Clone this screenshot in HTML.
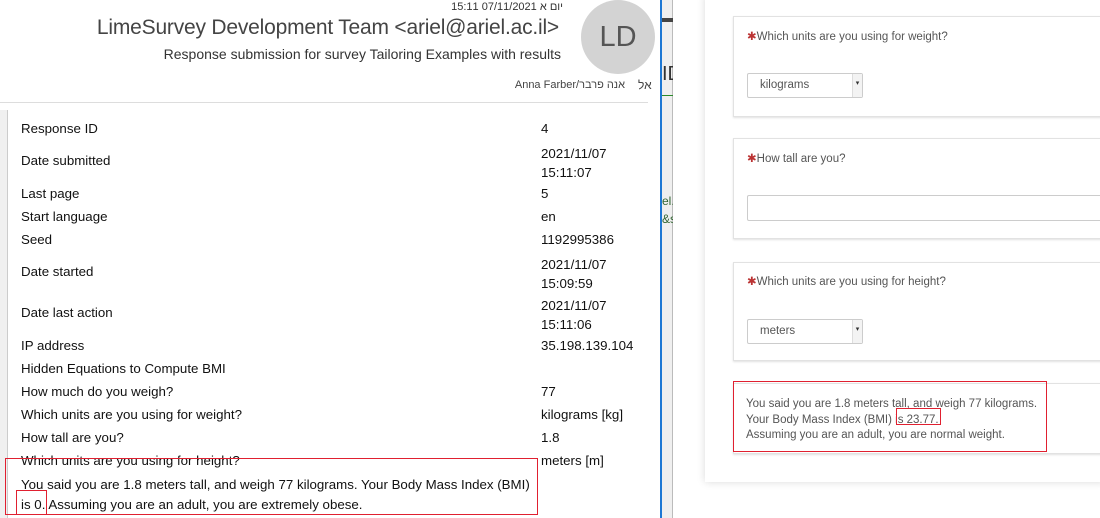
<!DOCTYPE html>
<html><head><meta charset="utf-8"><style>
*{margin:0;padding:0;box-sizing:border-box}
body{width:1100px;height:518px;position:relative;overflow:hidden;background:#fff;font-family:"Liberation Sans","Noto Sans CJK SC",sans-serif;color:#222}
.a{position:absolute;white-space:nowrap}
.l{position:absolute;left:21px;font-size:13.3px;color:#111}
.v{position:absolute;left:541px;font-size:13.3px;color:#111}
.card{position:absolute;left:733px;width:380px;border:1px solid #e2e2e2;background:#fff;box-shadow:0 1px 2px rgba(0,0,0,.12)}
.q{position:absolute;left:13px;font-size:11.5px;color:#555}
.q b{color:#b33;font-weight:normal}
.sel{position:absolute;left:13px;width:116px;height:25px;border:1px solid #ccc;border-radius:2px;font-size:11.5px;color:#555;padding:5px 0 0 12px;background:#fff}
.sel i{position:absolute;right:0;top:0;width:10px;height:23px;border-left:1px solid #ddd;background:#f3f3f3;font-style:normal;font-size:7px;text-align:center;line-height:20px;color:#333}
.rt{font-size:11.5px;color:#555;line-height:15.5px}
</style></head><body>
<div class="a" style="left:0;top:110px;width:8px;height:408px;background:#f0f0f0;border-right:1px solid #ccc"></div>
<div class="a" style="right:537px;top:1px;font-size:11px;color:#333">יום א 07/11/2021 15:11</div>
<div class="a" style="right:541px;top:16px;font-size:21px;color:#444;letter-spacing:-0.2px">LimeSurvey Development Team &lt;ariel@ariel.ac.il&gt;</div>
<div class="a" style="right:539px;top:46px;font-size:14px;color:#333">Response submission for survey Tailoring Examples with results</div>
<div class="a" style="left:581px;top:0;width:74px;height:74px;border-radius:50%;background:#d3d3d3;color:#555;font-size:29px;text-align:center;line-height:74px">LD</div>
<div class="a" style="right:475px;top:79px;font-size:11px;color:#444">Anna Farber/אנה פרבר</div>
<div class="a" style="left:638px;top:78px;font-size:12px;color:#444">אל</div>
<div class="a" style="left:0;top:102px;width:648px;height:1px;background:#ddd"></div>
<div class="l" style="top:121px">Response ID</div><div class="v" style="top:121px">4</div>
<div class="l" style="top:153px">Date submitted</div><div class="v" style="top:144px;line-height:19px">2021/11/07<br>15:11:07</div>
<div class="l" style="top:186px">Last page</div><div class="v" style="top:186px">5</div>
<div class="l" style="top:209px">Start language</div><div class="v" style="top:209px">en</div>
<div class="l" style="top:232px">Seed</div><div class="v" style="top:232px">1192995386</div>
<div class="l" style="top:264px">Date started</div><div class="v" style="top:255px;line-height:19px">2021/11/07<br>15:09:59</div>
<div class="l" style="top:305px">Date last action</div><div class="v" style="top:296px;line-height:19px">2021/11/07<br>15:11:06</div>
<div class="l" style="top:338px">IP address</div><div class="v" style="top:338px">35.198.139.104</div>
<div class="l" style="top:361px">Hidden Equations to Compute BMI</div>
<div class="l" style="top:384px">How much do you weigh?</div><div class="v" style="top:384px">77</div>
<div class="l" style="top:407px">Which units are you using for weight?</div><div class="v" style="top:407px">kilograms [kg]</div>
<div class="l" style="top:430px">How tall are you?</div><div class="v" style="top:430px">1.8</div>
<div class="l" style="top:453px">Which units are you using for height?</div><div class="v" style="top:453px">meters [m]</div>
<div class="l" style="top:475px;line-height:20px">You said you are 1.8 meters tall, and weigh 77 kilograms. Your Body Mass Index (BMI)<br>is 0. Assuming you are an adult, you are extremely obese.</div>
<div class="a" style="left:5px;top:458px;width:533px;height:57px;border:1px solid #e02030"></div>
<div class="a" style="left:16px;top:490px;width:31px;height:25px;border:1px solid #e02030"></div>
<div class="a" style="left:660px;top:0;width:2px;height:518px;background:#1e78d4"></div>
<div class="a" style="left:662px;top:0;width:11px;height:518px;background:#efefef;border-right:1px solid #bbb"></div>
<div class="a" style="left:662px;top:18px;width:11px;height:4px;background:#444"></div>
<div class="a" style="left:662px;top:95px;width:11px;height:1px;background:#2a8a2a"></div>
<div class="a" style="left:662px;top:63px;font-size:20px;color:#333;width:11px;overflow:hidden">ID</div>
<div class="a" style="left:662px;top:192px;font-size:12px;color:#363;width:11px;overflow:hidden;line-height:18px">el.<br>&amp;s</div>
<div class="a" style="left:705px;top:-5px;width:400px;height:487px;background:#fff;box-shadow:0 0 8px rgba(0,0,0,.15)"></div>
<div class="card" style="top:16px;height:101px"><div class="q" style="top:12px"><b>✱</b>Which units are you using for weight?</div><div class="sel" style="top:56px">kilograms<i>▾</i></div></div>
<div class="card" style="top:138px;height:101px"><div class="q" style="top:12px"><b>✱</b>How tall are you?</div><div class="a" style="left:13px;top:56px;width:370px;height:26px;border:1px solid #ccc;border-radius:2px"></div></div>
<div class="card" style="top:262px;height:99px"><div class="q" style="top:11px"><b>✱</b>Which units are you using for height?</div><div class="sel" style="top:56px">meters<i>▾</i></div></div>
<div class="card" style="top:383px;height:71px"><div class="a rt" style="left:12px;top:13px">You said you are 1.8 meters tall, and weigh 77 kilograms.<br>Your Body Mass Index (BMI) is 23.77.<br>Assuming you are an adult, you are normal weight.</div></div>
<div class="a" style="left:733px;top:381px;width:314px;height:71px;border:1px solid #e02030"></div>
<div class="a" style="left:896px;top:408px;width:45px;height:17px;border:1px solid #e02030"></div>
</body></html>
